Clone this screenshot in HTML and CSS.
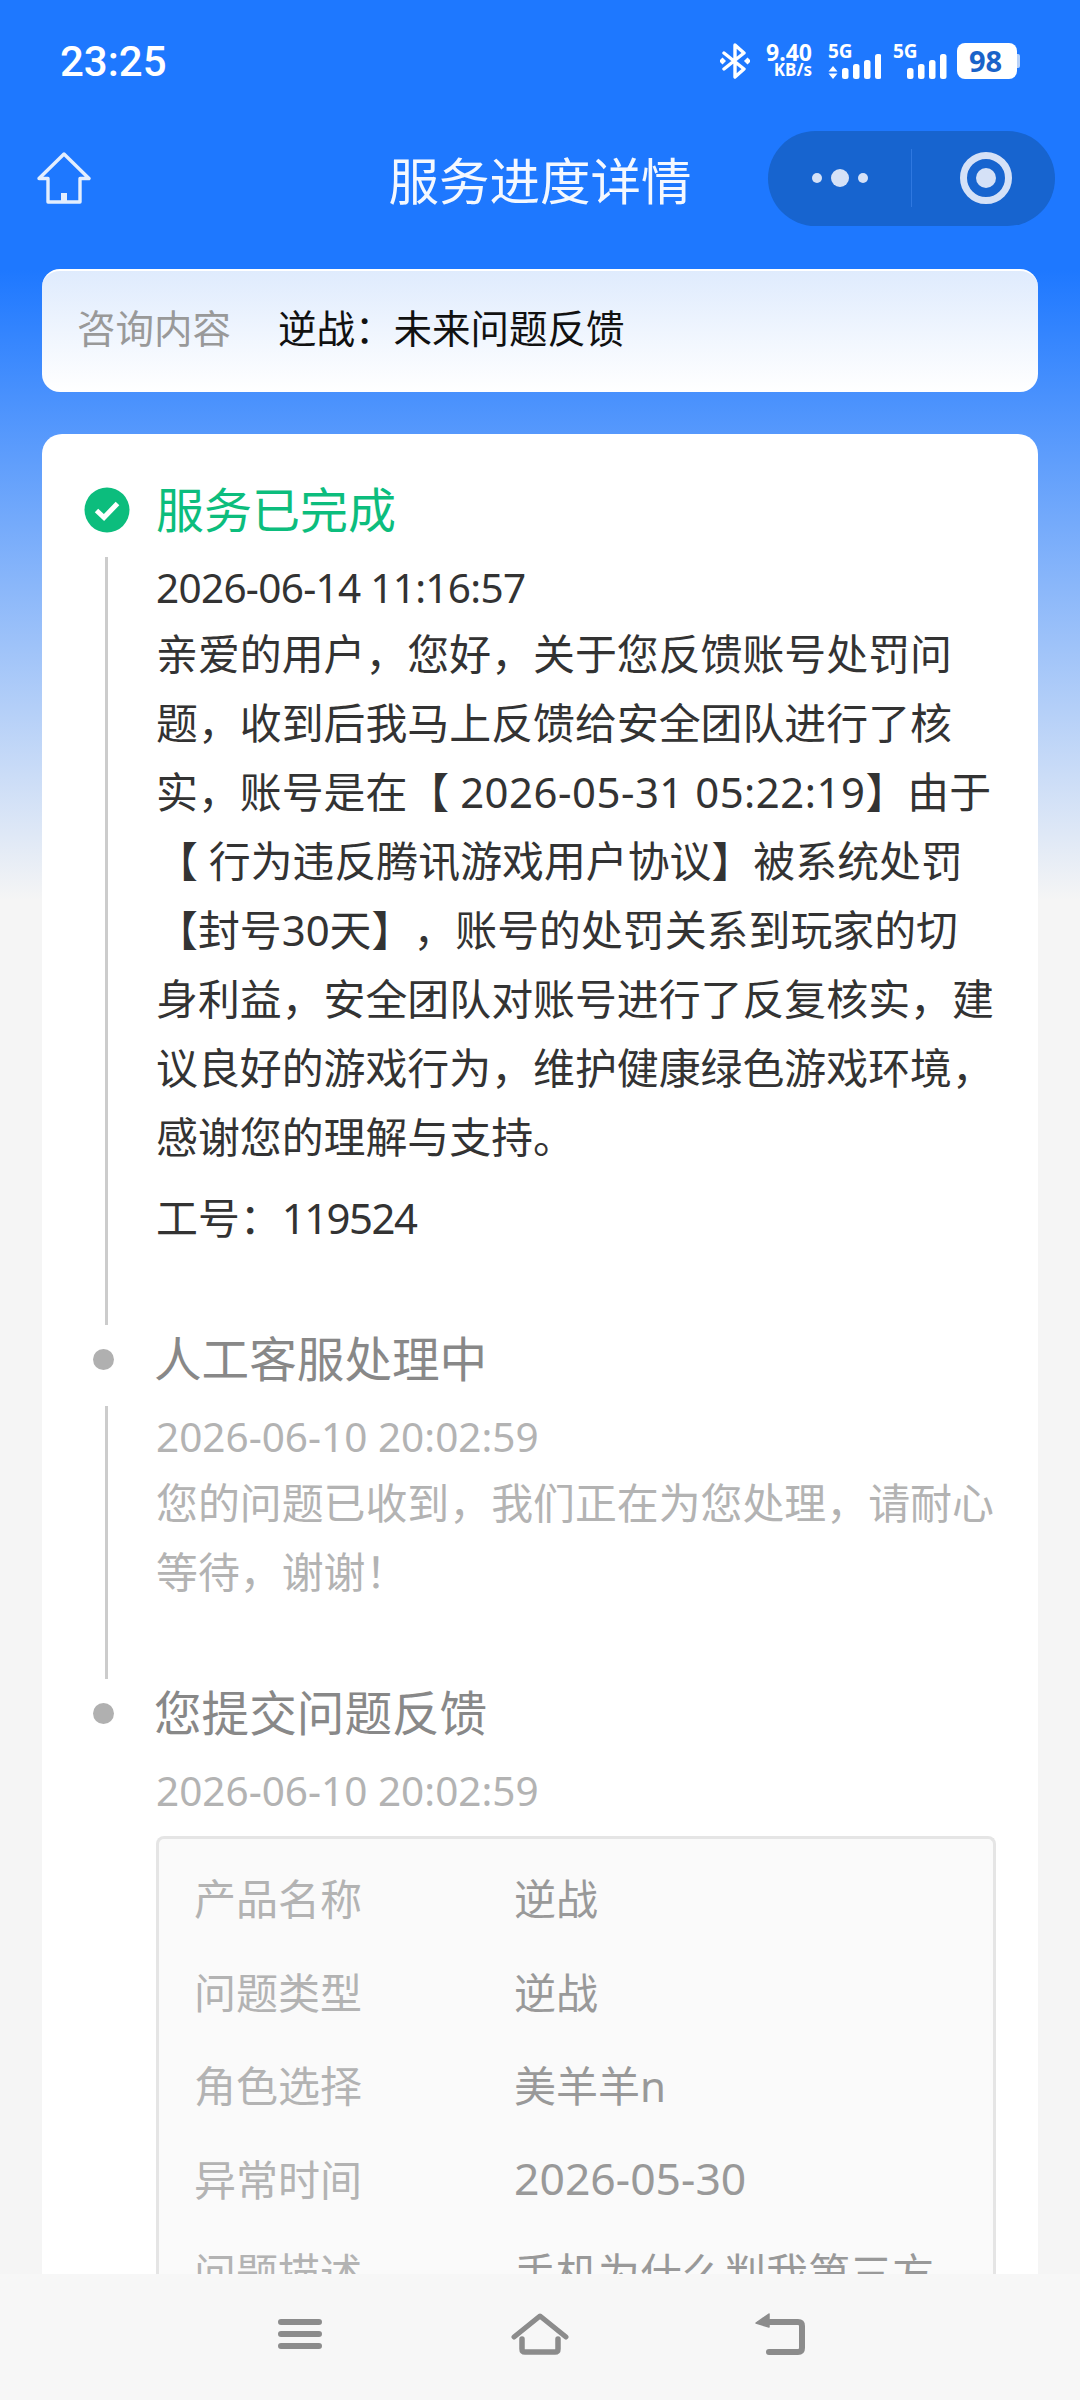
FILE: index.html
```html
<!DOCTYPE html>
<html lang="zh-CN">
<head>
  <meta charset="UTF-8" />
  <meta name="viewport" content="width=device-width, initial-scale=1" />
  <title>服务进度详情</title>
  <link rel="stylesheet" href="styles.css">
</head>
<body>

<div class="statusbar">
  <span class="time">23:25</span>
  <div class="status-icons">
    <svg class="bt" width="30" height="36" viewBox="0 0 30 36">
      <path d="M4 10 L24 26 L15 34 V2 L24 10 L4 26" fill="none" stroke="#fff" stroke-width="3.4" stroke-linejoin="round" stroke-linecap="round"/>
      <rect x="0" y="15.5" width="5" height="5" transform="rotate(45 2.5 18)" fill="#fff"/>
      <rect x="25" y="15.5" width="5" height="5" transform="rotate(45 27.5 18)" fill="#fff"/>
    </svg>
    <div class="speed"><b>9.40</b><span>KB/s</span></div>
    <div class="signal">
      <span class="sig-text">5G</span>
      <svg width="53" height="36" viewBox="0 0 53 36">
        <path d="M5 23 L9.5 28.5 H0.5 Z M5 36 L0.5 30.5 H9.5 Z" fill="#fff"/>
        <rect x="14" y="25" width="6.5" height="11" rx="2.5" fill="#fff"/>
        <rect x="25" y="21" width="6.5" height="15" rx="2.5" fill="#fff"/>
        <rect x="36" y="17" width="6.5" height="19" rx="2.5" fill="#fff"/>
        <rect x="47" y="11" width="6.5" height="25" rx="2.5" fill="#fff"/>
      </svg>
    </div>
    <div class="signal">
      <span class="sig-text">5G</span>
      <svg width="54" height="36" viewBox="0 0 54 36">
        <rect x="14" y="25" width="6.5" height="11" rx="2.5" fill="#fff"/>
        <rect x="25" y="21" width="6.5" height="15" rx="2.5" fill="#fff"/>
        <rect x="36" y="17" width="6.5" height="19" rx="2.5" fill="#fff"/>
        <rect x="47" y="11" width="6.5" height="25" rx="2.5" fill="#fff"/>
      </svg>
    </div>
    <div class="battery"><span class="battery-body">98</span><i class="battery-nub"></i></div>
  </div>
</div>

<div class="navbar">
  <svg class="nav-home" width="54" height="52" viewBox="0 0 54 52">
    <path d="M27 2 L52 26.500 H43 V50 H11 V26.500 H2 Z" fill="none" stroke="#e3eefe" stroke-width="3.400" stroke-linejoin="round"/>
    <rect x="24" y="41" width="6" height="9" fill="#e3eefe"/>
  </svg>
  <div class="nav-title">服务进度详情</div>
  <div class="capsule">
    <div class="capsule-dots"><i></i><i class="big"></i><i></i></div>
    <div class="capsule-line"></div>
    <div class="capsule-target"><i></i></div>
  </div>
</div>

<div class="content">
  <div class="summary">
    <span class="summary-label">咨询内容</span>
    <span class="summary-value">逆战：未来问题反馈</span>
  </div>

  <div class="progress">
    <div class="step-head">
      <svg class="done-icon" width="46" height="46" viewBox="0 0 46 46">
        <circle cx="23" cy="23" r="22.500" fill="#0cbd7d"/>
        <path d="M12.500 23.500 L20 30.500 L33.500 16.500" fill="none" stroke="#fff" stroke-width="5"/>
      </svg>
      <span class="step-title done">服务已完成</span>
    </div>
    <div class="step-body line">
      <div class="step-date tight">2026-06-14 11:16:57</div>
      <div class="step-text">亲爱的用户，您好，关于您反馈账号处罚问题，收到后我马上反馈给安全团队进行了核实，账号是在【 <span class="num-wide">2026-05-31 05:22:19</span>】由于【 行为违反腾讯游戏用户协议】被系统处罚【封号30天】，账号的处罚关系到玩家的切身利益，安全团队对账号进行了反复核实，建议良好的游戏行为，维护健康绿色游戏环境，感谢您的理解与支持。</div>
      <div class="step-text staff">工号：<span class="num-tight">119524</span></div>
    </div>

    <div class="step-head">
      <i class="dot"></i>
      <span class="step-title">人工客服处理中</span>
    </div>
    <div class="step-body line muted">
      <div class="step-date">2026-06-10 20:02:59</div>
      <div class="step-text">您的问题已收到，我们正在为您处理，请耐心等待，谢谢！</div>
    </div>

    <div class="step-head">
      <i class="dot"></i>
      <span class="step-title">您提交问题反馈</span>
    </div>
    <div class="step-body muted">
      <div class="step-date">2026-06-10 20:02:59</div>
      <div class="detail">
        <div class="detail-row"><span class="detail-label">产品名称</span><span class="detail-value">逆战</span></div>
        <div class="detail-row"><span class="detail-label">问题类型</span><span class="detail-value">逆战</span></div>
        <div class="detail-row"><span class="detail-label">角色选择</span><span class="detail-value">美羊羊n</span></div>
        <div class="detail-row"><span class="detail-label">异常时间</span><span class="detail-value date">2026-05-30</span></div>
        <div class="detail-row"><span class="detail-label">问题描述</span><span class="detail-value">手机为什么判我第三方</span></div>
      </div>
    </div>
  </div>
</div>

<div class="bottombar">
  <svg width="60" height="46" viewBox="0 0 60 46">
    <path d="M11 9 H49 M11 21 H49 M11 33 H49" stroke="#8c8c8c" stroke-width="6" stroke-linecap="round"/>
  </svg>
  <svg width="60" height="46" viewBox="0 0 60 46">
    <path d="M4 24 L30 3 L56 24" fill="none" stroke="#8c8c8c" stroke-width="5" stroke-linecap="round" stroke-linejoin="round"/>
    <path d="M12 26 V36 Q12 39 15 39 H45 Q48 39 48 36 V26" fill="none" stroke="#8c8c8c" stroke-width="5.500" stroke-linecap="round"/>
  </svg>
  <svg width="60" height="46" viewBox="0 0 60 46">
    <path d="M20 9 H48 Q52 9 52 13 V35 Q52 39 48 39 H19" fill="none" stroke="#8c8c8c" stroke-width="6" stroke-linecap="round"/>
    <path d="M6 10 L19 1 V14 Z" fill="#8c8c8c" stroke="#8c8c8c" stroke-width="1.500" stroke-linejoin="round"/>
  </svg>
</div>

</body>
</html>
```

FILE: styles.css
```css
* {
  box-sizing: border-box;
}
html, body {
  height: 2400px;
}
body {
  margin: 0;
  display: flex;
  flex-direction: column;
  overflow: hidden;
  font-family: "Noto Sans", "Noto Sans CJK SC", sans-serif;
  text-spacing-trim: space-all;
  background: linear-gradient(180deg, #1e78ff 0, #1e78ff 270px, #f5f5f5 900px);
}

.statusbar {
  height: 120px;
  flex: none;
  display: flex;
  align-items: center;
  justify-content: space-between;
  padding: 2px 60px 0 60px;
  color: #fff;
}
.time {
  font-family: Roboto, sans-serif;
  font-size: 42px;
  font-weight: 500;
}
.status-icons {
  display: flex;
  align-items: center;
}
.bt {
  margin-right: 14px;
}
.speed {
  display: flex;
  flex-direction: column;
  align-items: flex-end;
  width: 48px;
  margin-right: 16px;
  line-height: 18px;
}
.speed b {
  font-size: 23px;
}
.speed span {
  font-size: 17px;
  font-weight: 700;
}
.sig-text {
  grid-area: 1 / 1;
  align-self: start;
  font-size: 19px;
  font-weight: 700;
  line-height: 16px;
}
.signal {
  display: grid;
  margin-right: 12px;
}
.signal svg {
  grid-area: 1 / 1;
}
.signal + .battery {
  margin-left: -2px;
}
.battery {
  display: flex;
  align-items: center;
}
.battery-body {
  width: 60px;
  height: 36px;
  background: #fff;
  border-radius: 8px;
  color: #1a63c9;
  font-size: 29px;
  font-weight: 700;
  line-height: 36px;
  text-align: center;
  padding-right: 3px;
}
.battery-nub {
  width: 3px;
  height: 14px;
  background: #b9d2f8;
  border-radius: 0 2px 2px 0;
}

.navbar {
  height: 116px;
  flex: none;
  display: flex;
  align-items: center;
  padding: 0 25px 0 37px;
  position: relative;
}
.nav-title {
  position: absolute;
  left: 0;
  right: 0;
  text-align: center;
  color: #f4f8ff;
  font-size: 50.500px;
}
.capsule {
  margin-left: auto;
  width: 287px;
  height: 95px;
  border-radius: 48px;
  background: #1764cf;
  display: flex;
  align-items: center;
  position: relative;
}
.capsule-dots {
  width: 143px;
  display: flex;
  align-items: center;
  justify-content: center;
  gap: 9px;
}
.capsule-dots i {
  width: 10px;
  height: 10px;
  border-radius: 50%;
  background: #d5e1f7;
}
.capsule-dots i.big {
  width: 18px;
  height: 18px;
}
.capsule-line {
  width: 1px;
  height: 58px;
  background: #2f78e0;
}
.capsule-target {
  width: 52px;
  height: 52px;
  margin-left: 48px;
  border: 7.500px solid #d5e1f7;
  border-radius: 50%;
  display: flex;
  align-items: center;
  justify-content: center;
}
.capsule-target i {
  width: 20px;
  height: 20px;
  border-radius: 50%;
  background: #d5e1f7;
}

.content {
  flex: 1;
  min-height: 0;
  overflow: hidden;
  padding: 33px 42px 0;
}
.summary {
  height: 123px;
  display: flex;
  align-items: center;
  padding: 0 35px 12px;
  border-top: 2px solid #fff;
  border-radius: 18px;
  background: linear-gradient(180deg, #dfebfd 0%, #ffffff 100%);
  font-size: 38.500px;
}
.summary-label {
  color: #999;
  width: 201px;
}
.summary-value {
  color: #111;
}

.progress {
  margin-top: 42px;
  padding-top: 42px;
  background: #fff;
  border-radius: 20px 20px 0 0;
  padding-right: 42px;
}
.step-head {
  height: 68px;
  margin-bottom: 13px;
  display: flex;
  align-items: center;
}
.done-icon {
  margin-left: 42px;
  margin-right: 26px;
}
.dot {
  width: 21px;
  height: 21px;
  border-radius: 50%;
  background: #b0b0b0;
  margin-left: 51px;
  margin-right: 40px;
}
.step-title {
  font-size: 47.600px;
  color: #888;
  margin-bottom: 6px;
}
.step-title.done {
  font-size: 48px;
  color: #0cbd7d;
}
.step-body {
  margin-left: 63px;
  padding-left: 48px;
  border-left: 3px solid transparent;
}
.step-body.line {
  border-left-color: #ccc;
  padding-bottom: 73px;
}
.step-date {
  font-size: 40.500px;
  line-height: 62px;
  color: #333;
}
.step-date.tight {
  letter-spacing: -0.700px;
}
.step-text {
  font-size: 41.900px;
  line-height: 69px;
  color: #333;
}
.num-wide {
  letter-spacing: 0.500px;
}
.num-tight {
  letter-spacing: -1.500px;
}
.staff {
  margin-top: 12px;
}
.muted .step-date, .muted .step-text {
  color: #b3b3b3;
}

.detail {
  margin-top: 14px;
  padding: 14px 35px 0;
  border: 3px solid #e5e5e5;
  border-bottom: 0;
  border-radius: 8px 8px 0 0;
  background: #fafafa;
}
.detail-row {
  display: flex;
  height: 93.500px;
  align-items: center;
  padding-bottom: 6px;
  font-size: 42px;
}
.detail-label {
  width: 320px;
  flex: none;
  color: #b3b3b3;
}
.detail-value {
  color: #999;
  white-space: nowrap;
}
.detail-value.date {
  font-size: 44.500px;
}

.bottombar {
  height: 126px;
  flex: none;
  display: flex;
  justify-content: center;
  gap: 180px;
  padding-top: 39px;
  background: #f7f7f7;
}
```
